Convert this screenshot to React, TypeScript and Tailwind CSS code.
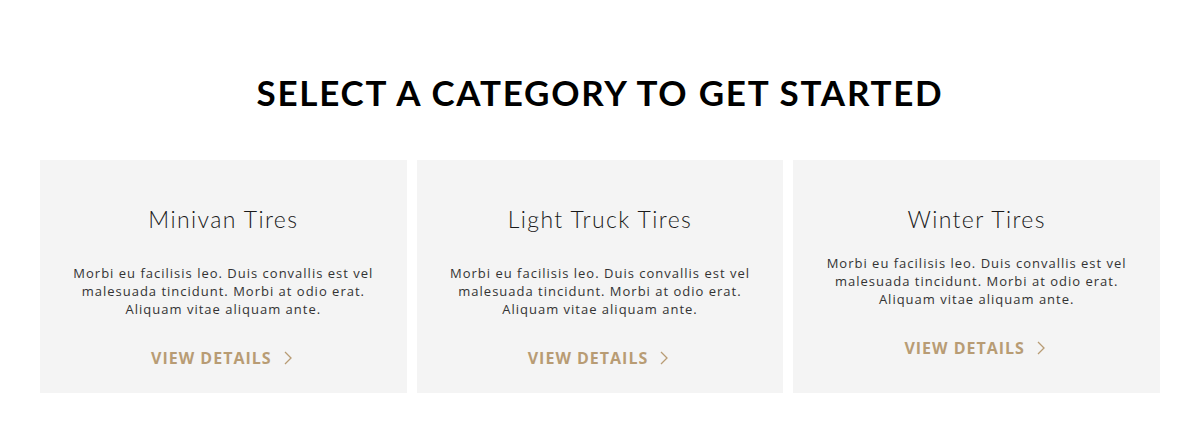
import { ReactNode } from "react";

// --- Types ---
interface Category {
  id: number;
  title: string;
  text: string;
  gap: string;
}

const CATEGORIES: Category[] = [
  {
    id: 1,
    title: "Minivan Tires",
    text: "Morbi eu facilisis leo. Duis convallis est vel malesuada tincidunt. Morbi at odio erat. Aliquam vitae aliquam ante.",
    gap: "mt-[30px]",
  },
  {
    id: 2,
    title: "Light Truck Tires",
    text: "Morbi eu facilisis leo. Duis convallis est vel malesuada tincidunt. Morbi at odio erat. Aliquam vitae aliquam ante.",
    gap: "mt-[30px]",
  },
  {
    id: 3,
    title: "Winter Tires",
    text: "Morbi eu facilisis leo. Duis convallis est vel malesuada tincidunt. Morbi at odio erat. Aliquam vitae aliquam ante.",
    gap: "mt-[20px]",
  },
];

function Chevron() {
  return (
    <svg width="8" height="14" viewBox="0 0 8 14" fill="none" className="ml-[12px]">
      <polyline points="1,1 7,7 1,13" stroke="#b89c74" strokeWidth="1.3" />
    </svg>
  );
}

function Card({ cat }: { cat: Category }): ReactNode {
  return (
    <div className="bg-[#f4f4f4] h-[233px] flex flex-col items-center pt-[44px] text-center">
      <h3 className="font-['Lato',sans-serif] font-light text-[23px] leading-[30px] tracking-[1.4px] text-[#1a1a1a]">
        {cat.title}
      </h3>
      <p
        className={`${cat.gap} w-[330px] font-['Open_Sans',sans-serif] text-[13px] leading-[18px] tracking-[1px] text-[#333]`}
      >
        {cat.text}
      </p>
      <a className="mt-[28px] mr-[4px] flex items-center h-[24px] font-['Open_Sans',sans-serif] font-bold text-[16px] tracking-[1px] text-[#b89c74] uppercase">
        View Details
        <Chevron />
      </a>
    </div>
  );
}

export default function App() {
  return (
    <section className="bg-white w-[1200px] h-[432px] pt-[72px]">
      <h2 className="text-center font-['Lato',sans-serif] font-bold text-[35px] leading-[40px] tracking-[1.75px] text-black">
        SELECT A CATEGORY TO GET STARTED
      </h2>
      <div className="mt-[48px] mx-[40px] grid grid-cols-3 gap-[10px]">
        {CATEGORIES.map((cat) => (
          <Card key={cat.id} cat={cat} />
        ))}
      </div>
    </section>
  );
}
